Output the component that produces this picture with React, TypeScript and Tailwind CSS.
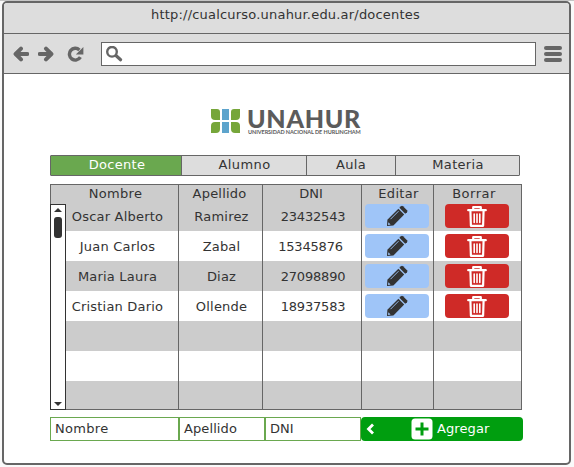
import React from "react";

const rows = [
  { name: "Oscar Alberto", last: "Ramirez", dni: "23432543" },
  { name: "Juan Carlos", last: "Zabal", dni: "15345876" },
  { name: "Maria Laura", last: "Diaz", dni: "27098890" },
  { name: "Cristian Dario", last: "Ollende", dni: "18937583" },
];

const grid = "grid grid-cols-[128px_84px_99px_72px_88px]";

function Arrow({ flip = false }: { flip?: boolean }) {
  return (
    <svg width="16" height="16" viewBox="0 0 16 16" className={flip ? "rotate-180" : ""}>
      <path d="M8 2.6 2.6 8 8 13.4M3.5 8h10.8" fill="none" stroke="#666" strokeWidth="4" strokeLinecap="round" strokeLinejoin="round" />
    </svg>
  );
}

function Pencil() {
  return (
    <svg width="22" height="22" viewBox="0 0 22 22">
      <path d="M1 21 1.4 14.7 12.4 3.8l5.8 5.8L7.4 20.6Z" fill="#333" />
      <path d="m13.4 2.8 1.6-1.6q1-.8 2 0l4 4q.8 1 0 2l-1.8 1.6Z" fill="#333" />
      <path d="m4.5 14.2 8-8" stroke="#9fc5f8" strokeWidth="0.9" />
      <path d="m2.3 17.3 2.3 2.3-2.5.5Z" fill="#9fc5f8" />
    </svg>
  );
}

function Trash() {
  return (
    <svg width="20" height="21" viewBox="0 0 20 21" fill="none" stroke="#fff" strokeLinecap="round" strokeLinejoin="round">
      <path d="M1.2 4.2h17.6M6.2 3.8V1.2h7.6v2.6M3.4 4.5l.5 15.3h12.2l.5-15.3" strokeWidth="2.2" />
      <path d="M7.2 8v8.5M10 8v8.5M12.8 8v8.5" strokeWidth="1.6" />
    </svg>
  );
}

function Logo() {
  return (
    <div className="flex h-[26px] gap-[6px]">
      <svg width="30" height="26" viewBox="0 0 30 26">
        <g fill="#76a63a">
          <path d="M0 0h6q3 0 3 3v8H4q-4 0-4-4Z" />
          <path d="M29 0h-6q-3 0-3 3v8h5q4 0 4-4Z" />
          <path d="M0 24h5q4 0 4-4v-7H4q-4 0-4 4Z" />
          <path d="M29 24h-5q-4 0-4-4v-7h5q4 0 4 4Z" />
        </g>
        <path d="M11 0h7v11h-7zM11 13h7v11h-7z" fill="#5da4cc" />
      </svg>
      <div className="-mt-px flex flex-col whitespace-nowrap font-[Lato,sans-serif] text-[#5b5b5b]">
        <span className="h-[21px] text-[25px] leading-[21px] font-black tracking-[0.7px]">UNAHUR</span>
        <span className="h-[6px] pl-px text-[5.5px] leading-[6px] font-bold tracking-[-0.06px]">UNIVERSIDAD NACIONAL DE HURLINGHAM</span>
      </div>
    </div>
  );
}

export default function App() {
  return (
    <div className="h-[467px] w-[574px] overflow-hidden border-t border-[#c6c6c6] bg-[#fafafa] pl-[2px] font-['DejaVu_Sans',sans-serif] text-[13px] leading-[15px] text-[#333]">
      <div className="h-[464px] w-[569px] overflow-hidden rounded-[5px] border-2 border-[#666] bg-white">
        <header className="h-[31px] border-b border-[#666] bg-[#ddd] pt-[4px] pr-[2px] text-center">
          <span className="tracking-[0.2px]">http://cualcurso.unahur.edu.ar/docentes</span>
        </header>
        <div className="flex h-10 items-center border-b border-[#666] bg-[#ddd] pl-[9px]">
          <Arrow />
          <div className="ml-[9px]"><Arrow flip /></div>
          <svg width="17" height="16" viewBox="0 0 17 16" className="ml-[13px]">
            <path d="M13.4 11.2A5.9 5.9 0 1 1 12.4 3.9" fill="none" stroke="#666" strokeWidth="3.4" />
            <path d="M16.4 1v7.4H8.8Z" fill="#666" />
          </svg>
          <div className="ml-[17px] flex h-6 w-[435px] items-start border border-[#666] bg-white pt-[3px] pl-1">
            <svg width="17" height="17" viewBox="0 0 17 17" fill="none" stroke="#666">
              <circle cx="6" cy="5.8" r="4.8" strokeWidth="2.4" />
              <path d="m10.2 9.8 4.4 3.9" strokeWidth="3.2" strokeLinecap="round" />
            </svg>
          </div>
          <div className="ml-2 flex flex-col gap-[2px]">
            <i className="h-1 w-[18px] rounded-full bg-[#666]" />
            <i className="h-1 w-[18px] rounded-full bg-[#666]" />
            <i className="h-1 w-[18px] rounded-full bg-[#666]" />
          </div>
        </div>

        <main className="pl-[46px]">
          <div className="pt-[35px] pl-[161px]"><Logo /></div>
          <nav className="mt-[20px] grid h-[21px] w-[470px] grid-cols-[131px_125px_89px_123px] rounded-[1px] border border-[#666] bg-[#ddd] text-center leading-[17px]">
            <span className="border-r border-[#666] bg-[#6aa84f] pl-[2px] tracking-[0.3px] text-white">Docente</span>
            <span className="border-r border-[#666] pl-px tracking-[0.4px]">Alumno</span>
            <span className="border-r border-[#666] tracking-[0.3px]">Aula</span>
            <span className="pl-px tracking-[0.3px]">Materia</span>
          </nav>

          <section className="relative mt-2 h-[226px] w-[472px] border border-[#666]">
            <div className={grid + " h-4 bg-[#ccc] text-center leading-[17px]"}>
              <span className="pl-px tracking-[0.3px]">Nombre</span>
              <span className="pr-[3px] tracking-[0.2px]">Apellido</span>
              <span className="pr-[3px]">DNI</span>
              <span className="pl-px tracking-[0.3px]">Editar</span>
              <span className="pr-2 tracking-[0.5px]">Borrar</span>
            </div>
            {rows.map((r, i) => (
              <div key={r.dni} className={grid + " h-[30px] text-center leading-[31px] " + (i % 2 ? "bg-white" : "bg-[#ccc]")}>
                <span className="pl-[5px] tracking-[0.2px]">{r.name}</span>
                <span className="pl-px tracking-[0.2px]">{r.last}</span>
                <span className={(i % 2 && i < 2 ? "pr-[4px]" : "pl-px") + " tracking-[-0.2px]"}>{r.dni}</span>
                <span className="flex justify-center pt-[3px] pr-[2px]">
                  <span className="flex h-6 w-16 items-center justify-center rounded-[4px] bg-[#9fc5f8]"><Pencil /></span>
                </span>
                <span className="flex justify-center pt-[3px] pr-[2px]">
                  <span className="flex h-6 w-16 items-center justify-center rounded-[4px] bg-[#cf2a27]"><Trash /></span>
                </span>
              </div>
            ))}
            <div className="h-[30px] bg-[#ccc]" />
            <div className="h-[30px]" />
            <div className="h-[28px] bg-[#ccc]" />
            <div className="pointer-events-none absolute inset-0 grid grid-cols-[128px_84px_99px_72px]">
              <i className="border-r border-[#666]" />
              <i className="border-r border-[#666]" />
              <i className="border-r border-[#666]" />
              <i className="border-r border-[#666]" />
            </div>
            <div className="absolute top-[19px] -bottom-px -left-px flex w-4 flex-col items-center border border-[#333] bg-white">
              <svg width="8" height="4" viewBox="0 0 8 4" className="mt-[3px]"><path d="M4 0 8 4H0Z" fill="#333" /></svg>
              <i className="mt-[5px] h-[21px] w-2 rounded-[3px] bg-[#333]" />
              <svg width="8" height="4" viewBox="0 0 8 4" className="mt-auto mb-[3px]"><path d="M0 0h8L4 4Z" fill="#333" /></svg>
            </div>
          </section>

          <form className="mt-[7px] flex h-6 leading-[22px]">
            <span className="w-[129px] border border-[#6aa84f] pl-1 tracking-[0.3px]">Nombre</span>
            <span className="w-[86px] border border-[#6aa84f] pl-1 tracking-[0.1px]">Apellido</span>
            <span className="w-[96px] border border-[#6aa84f] pl-1">DNI</span>
            <span className="flex w-[162px] items-center rounded-[4px] bg-[#009e0f] pl-[5px] text-white">
              <svg width="9" height="12" viewBox="0 0 9 12"><path d="M7 1.5 2.5 6 7 10.5" fill="none" stroke="#fff" strokeWidth="2.8" /></svg>
              <svg width="22" height="22" viewBox="0 0 22 22" className="ml-9">
                <rect x="0.5" y="0.5" width="21" height="21" rx="3.5" fill="#fff" />
                <path d="M11 4.5v13M4.5 11h13" stroke="#009e0f" strokeWidth="3" />
              </svg>
              <span className="ml-1 tracking-[0.1px]">Agregar</span>
            </span>
          </form>
        </main>
      </div>
    </div>
  );
}
